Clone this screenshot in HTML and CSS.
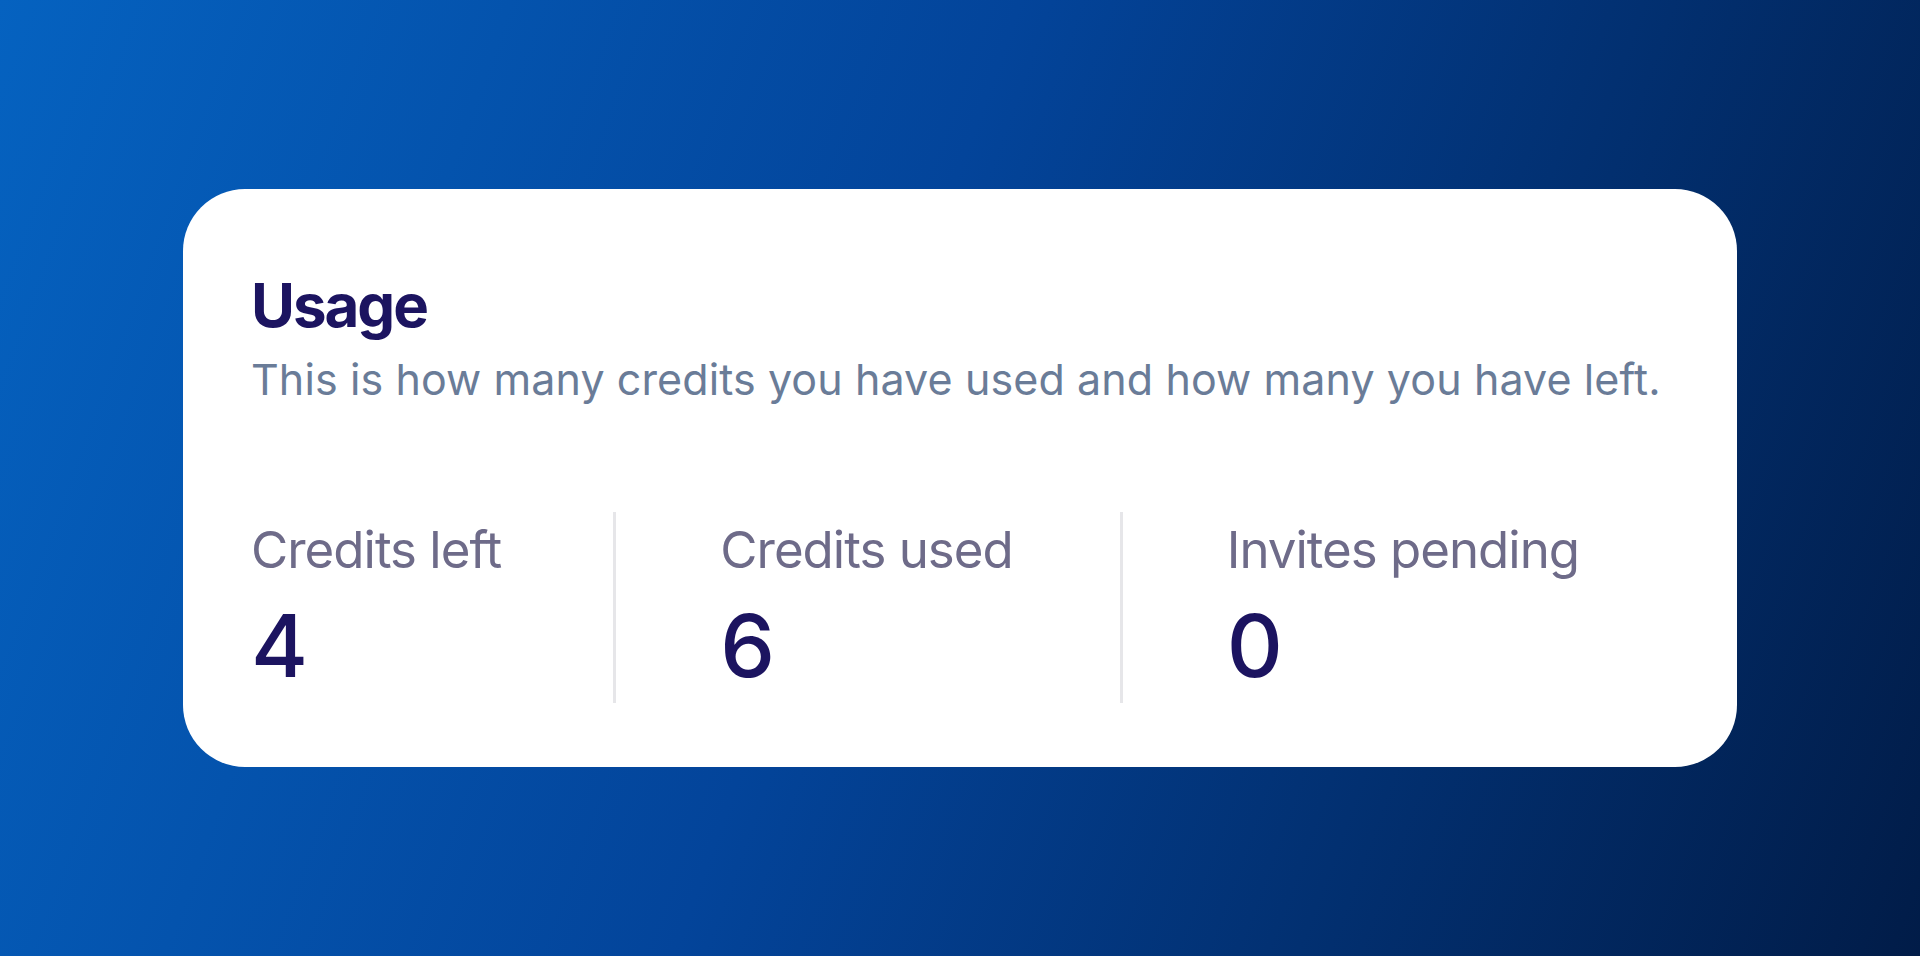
FILE: index.html
```html
<!DOCTYPE html>
<html lang="en">
<head>
<meta charset="utf-8">
<title>Usage</title>
<link rel="stylesheet" href="styles.css">
</head>
<body>
<main class="stage">
  <section class="card">
    <h1 class="card-title">Usage</h1>
    <p class="card-subtitle">This is how many credits you have used and how many you have left.</p>
    <dl class="stats">
      <div class="stat">
        <dt class="stat-label">Credits left</dt>
        <dd class="stat-value">4</dd>
      </div>
      <div class="stat">
        <dt class="stat-label">Credits used</dt>
        <dd class="stat-value">6</dd>
      </div>
      <div class="stat">
        <dt class="stat-label">Invites pending</dt>
        <dd class="stat-value">0</dd>
      </div>
    </dl>
  </section>
</main>
</body>
</html>
```
FILE: styles.css
```css
* { box-sizing: border-box; }
html, body { margin: 0; padding: 0; height: 100%; }
body {
  font-family: Inter, "Noto Sans", sans-serif;
  background: linear-gradient(110deg, #0562c0 0%, #03449a 45%, #011c48 100%);
}
.stage {
  height: 100%;
  display: flex;
  align-items: center;
  justify-content: center;
}
.card {
  width: 1554px;
  height: 578px;
  background: #ffffff;
  border-radius: 62px;
  padding: 80px 68px 64px 68px;
}
.card-title {
  margin: 0;
  font-size: 60px;
  line-height: 72px;
  font-weight: 700;
  color: #1c1460;
  letter-spacing: -2px;
}
.card-subtitle {
  margin: 12px 0 0 0;
  font-size: 43px;
  line-height: 52px;
  font-weight: 400;
  color: #6a7c98;
  letter-spacing: 0.1px;
  white-space: nowrap;
}
.stats {
  margin: 107px 0 0 0;
  display: flex;
}
.stat {
  flex: 0 0 auto;
  padding: 8px 107px 9px 104px;
  border-left: 3px solid #e6e6e9;
}
.stat:first-child { padding-left: 0; padding-right: 112px; border-left: none; }
.stat-label {
  font-size: 51px;
  line-height: 60px;
  color: #6e6b89;
  letter-spacing: -1px;
  white-space: nowrap;
}
.stat-value {
  margin: 18px 0 0 0;
  font-size: 87px;
  line-height: 96px;
  font-weight: 500;
  color: #1c1460;
}
```
